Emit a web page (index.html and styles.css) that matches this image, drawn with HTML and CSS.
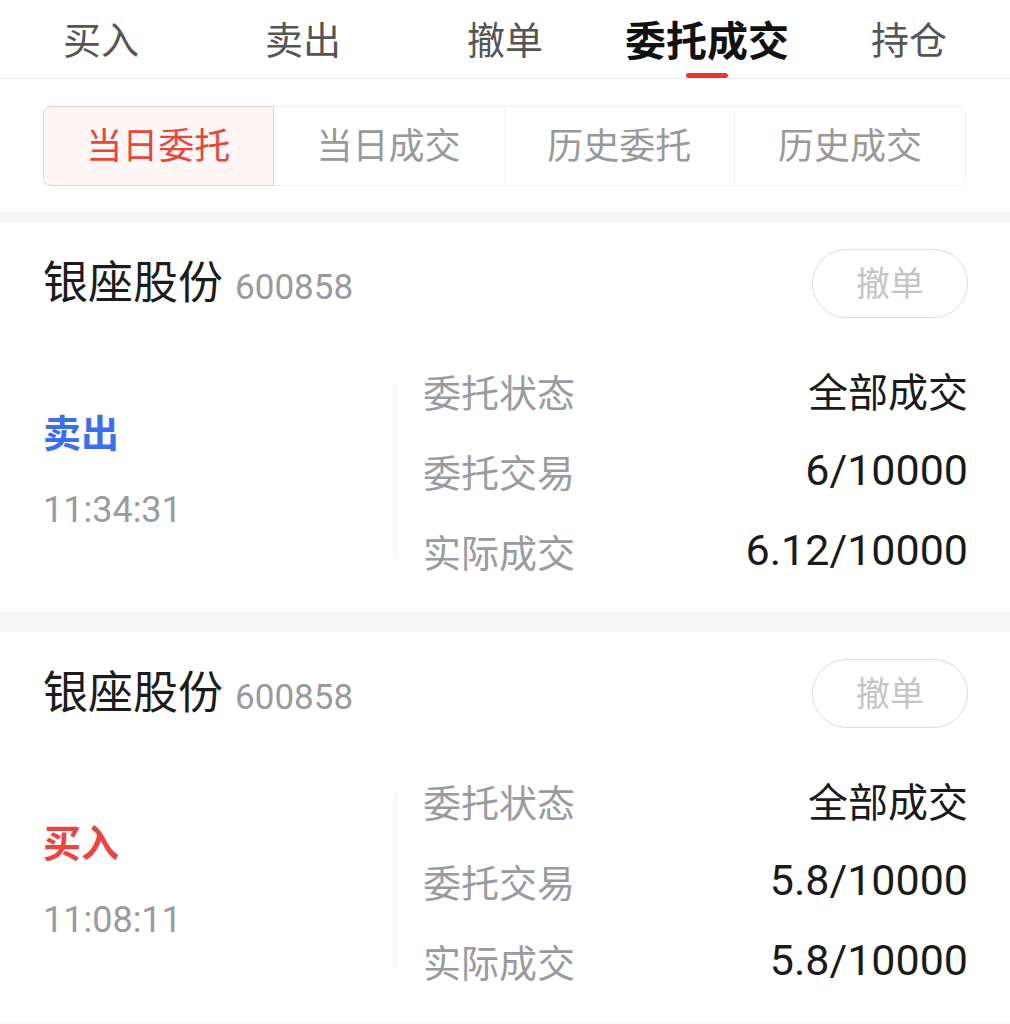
FILE: index.html
```html
<!DOCTYPE html>
<html lang="zh-CN">
  <head>
    <meta charset="UTF-8" />
    <meta name="viewport" content="width=device-width, initial-scale=1.0" />
    <title>委托成交</title>
    <link rel="stylesheet" href="styles.css">
  </head>

  <body>
    <!--顶部标签-->
    <nav class="tabs">
      <div class="tab">买入</div>
      <div class="tab">卖出</div>
      <div class="tab">撤单</div>
      <div class="tab tab-active">委托成交</div>
      <div class="tab">持仓</div>
    </nav>

    <!--筛选-->
    <div class="filter">
      <div class="seg seg-active">当日委托</div>
      <div class="seg">当日成交</div>
      <div class="seg">历史委托</div>
      <div class="seg">历史成交</div>
    </div>

    <div class="order">
      <div class="order-head">
        <div class="stock">银座股份 <span class="code">600858</span></div>
        <button type="button" class="cancel">撤单</button>
      </div>
      <div class="order-body">
        <div class="side">
          <div class="dir dir-sell">卖出</div>
          <div class="time">11:34:31</div>
        </div>
        <div class="info">
          <div class="row"><span class="label">委托状态</span><span class="value">全部成交</span></div>
          <div class="row"><span class="label">委托交易</span><span class="value num">6/10000</span></div>
          <div class="row"><span class="label">实际成交</span><span class="value num">6.12/10000</span></div>
        </div>
      </div>
    </div>

    <div class="order">
      <div class="order-head">
        <div class="stock">银座股份 <span class="code">600858</span></div>
        <button type="button" class="cancel">撤单</button>
      </div>
      <div class="order-body">
        <div class="side">
          <div class="dir dir-buy">买入</div>
          <div class="time">11:08:11</div>
        </div>
        <div class="info">
          <div class="row"><span class="label">委托状态</span><span class="value">全部成交</span></div>
          <div class="row"><span class="label">委托交易</span><span class="value num">5.8/10000</span></div>
          <div class="row"><span class="label">实际成交</span><span class="value num">5.8/10000</span></div>
        </div>
      </div>
    </div>
  </body>
</html>
```

FILE: styles.css
```css
body {
  font-family: 'Noto Sans CJK SC', 'Noto Sans', sans-serif;
  margin: 0;
  padding: 0;
  background: #f5f6f8;
  color: #222;
}

.tabs {
  display: grid;
  grid-template-columns: repeat(5, 1fr);
  height: 78px;
  background: #fff;
  border-bottom: 1px solid #eeeeee;
}

.tab {
  position: relative;
  text-align: center;
  font-size: 38px;
  line-height: 40px;
  padding-top: 18px;
  color: #555;
}

.tab-active {
  font-size: 41px;
  font-weight: bold;
  color: #111;
}

.tab-active::after {
  content: '';
  position: absolute;
  left: 50%;
  bottom: 0;
  width: 42px;
  height: 5px;
  margin-left: -21px;
  border-radius: 3px;
  background: #e8392f;
}

.filter {
  display: grid;
  grid-template-columns: repeat(4, 1fr);
  padding: 27px 44px 26px 43px;
  margin-bottom: 10px;
  background: #fff;
}

.seg {
  height: 78px;
  line-height: 72px;
  text-align: center;
  font-size: 36px;
  color: #999;
  border: 1px solid #f0f0f0;
  border-left: none;
}

.seg:last-child {
  border-radius: 0 8px 8px 0;
}

.seg-active {
  color: #e8453c;
  background: #fff6f6;
  border: 1px solid #f7caca;
  border-radius: 8px 0 0 8px;
}

.order {
  background: #fff;
  padding: 27px 42px 22px 43px;
  margin-bottom: 20px;
}

.order-head {
  display: flex;
  justify-content: space-between;
  align-items: center;
}

.stock {
  font-size: 45px;
  line-height: 50px;
  color: #1c1c1c;
}

.code {
  font-family: Roboto, 'Noto Sans', sans-serif;
  font-size: 35px;
  margin-left: 2px;
  color: #999a9f;
}

.cancel {
  width: 156px;
  height: 69px;
  font-family: inherit;
  font-size: 34px;
  line-height: 60px;
  color: #c4c4c4;
  background: #fff;
  border: 1.5px solid #dcdcdc;
  border-radius: 35px;
  padding: 0 0 4px;
}

.order-body {
  display: flex;
  align-items: center;
  margin-top: 32px;
}

.side {
  width: 352px;
  height: 175px;
  display: flex;
  flex-direction: column;
  justify-content: center;
  gap: 39px;
  border-right: 1px solid #f0f0f0;
}

.dir {
  font-size: 38px;
  line-height: 40px;
  font-weight: bold;
}

.dir-sell {
  color: #3c6ef0;
}

.dir-buy {
  color: #ea4540;
}

.time {
  font-family: Roboto, 'Noto Sans', sans-serif;
  font-size: 36px;
  line-height: 40px;
  color: #9a9ba0;
}

.info {
  flex: 1;
  padding-left: 27px;
}

.row {
  display: flex;
  justify-content: space-between;
  align-items: center;
  height: 80px;
}

.label {
  font-size: 38px;
  color: #9a9ba0;
}

.value {
  font-size: 40px;
  color: #1a1a1a;
}

.num {
  font-family: Roboto, 'Noto Sans', sans-serif;
  font-size: 43px;
}
```
